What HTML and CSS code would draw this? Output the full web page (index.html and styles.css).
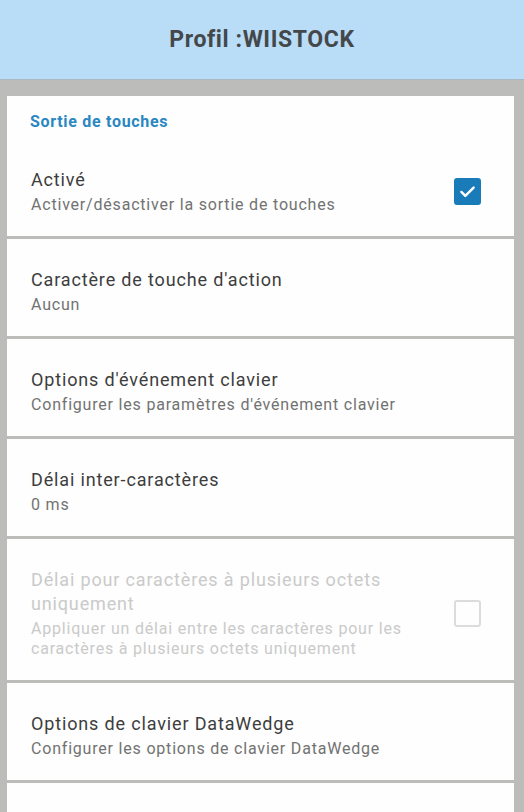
FILE: index.html
```html
<!DOCTYPE html>
<html lang="fr">
<head>
<meta charset="utf-8">
<title>Profil :WIISTOCK</title>
<link rel="stylesheet" href="styles.css">
</head>
<body>
<header class="appbar">
  <h1 class="appbar-title">Profil :WIISTOCK</h1>
</header>
<main class="list">
  <section class="card">
    <div class="section-title">Sortie de touches</div>
    <div class="row">
      <div class="texts">
        <div class="title">Activé</div>
        <div class="summary">Activer/désactiver la sortie de touches</div>
      </div>
      <span class="checkbox checked">
        <svg viewBox="0 0 24 24" width="21" height="21"><path d="M5 12.5l4.5 4.5L19 7.5" fill="none" stroke="#fff" stroke-width="2.8" stroke-linecap="round" stroke-linejoin="round"/></svg>
      </span>
    </div>
  </section>
  <section class="card">
    <div class="row">
      <div class="texts">
        <div class="title">Caractère de touche d'action</div>
        <div class="summary">Aucun</div>
      </div>
    </div>
  </section>
  <section class="card">
    <div class="row">
      <div class="texts">
        <div class="title">Options d'événement clavier</div>
        <div class="summary">Configurer les paramètres d'événement clavier</div>
      </div>
    </div>
  </section>
  <section class="card">
    <div class="row">
      <div class="texts">
        <div class="title">Délai inter-caractères</div>
        <div class="summary">0 ms</div>
      </div>
    </div>
  </section>
  <section class="card">
    <div class="row disabled">
      <div class="texts">
        <div class="title">Délai pour caractères à plusieurs octets uniquement</div>
        <div class="summary">Appliquer un délai entre les caractères pour les caractères à plusieurs octets uniquement</div>
      </div>
      <span class="checkbox"></span>
    </div>
  </section>
  <section class="card">
    <div class="row">
      <div class="texts">
        <div class="title">Options de clavier DataWedge</div>
        <div class="summary">Configurer les options de clavier DataWedge</div>
      </div>
    </div>
  </section>
  <section class="card">
    <div class="row disabled">
      <div class="texts">
        <div class="title">Formatage de base des données</div>
        <div class="summary">Configurer le formatage de base des données</div>
      </div>
    </div>
  </section>
</main>
</body>
</html>
```
FILE: styles.css
```css
* { box-sizing: border-box; }
html, body {
  margin: 0;
  padding: 0;
}
body {
  background: #bcbdbb;
  font-family: Roboto, "Noto Sans", sans-serif;
  width: 524px;
  overflow: hidden;
}
.appbar {
  height: 80px;
  background: #b9dcf7;
  display: flex;
  align-items: center;
  justify-content: center;
  border-bottom: 1px solid #a9b8c2;
}
.appbar-title {
  margin: 0;
  font-size: 23px;
  font-weight: 700;
  color: #45484b;
  letter-spacing: 0.6px;
}
.list {
  display: flex;
  flex-direction: column;
  gap: 3px;
  padding: 16px 10px 0 7px;
}
.card {
  background: #fdfefd;
}
.section-title {
  padding: 17px 24px 8px 23px;
  font-size: 16px;
  line-height: 18px;
  font-weight: 700;
  letter-spacing: 0.7px;
  color: #2a87c2;
}
.row {
  display: flex;
  align-items: center;
  padding: 29px 33px 21px 24px;
  gap: 24px;
}
.texts {
  flex: 1;
  min-width: 0;
}
.title {
  font-size: 18px;
  line-height: 24px;
  letter-spacing: 0.85px;
  color: #3d3d3d;
}
.summary {
  margin-top: 3px;
  font-size: 16px;
  line-height: 20px;
  letter-spacing: 0.8px;
  color: #727272;
}
.disabled .title,
.disabled .summary {
  color: #cacaca;
}
.checkbox {
  flex: none;
  width: 27px;
  height: 27px;
  border-radius: 3px;
  border: 2px solid #dcdcdc;
  display: flex;
  align-items: center;
  justify-content: center;
}
.checkbox.checked {
  background: #1a7bb9;
  border-color: #1a7bb9;
}
```
